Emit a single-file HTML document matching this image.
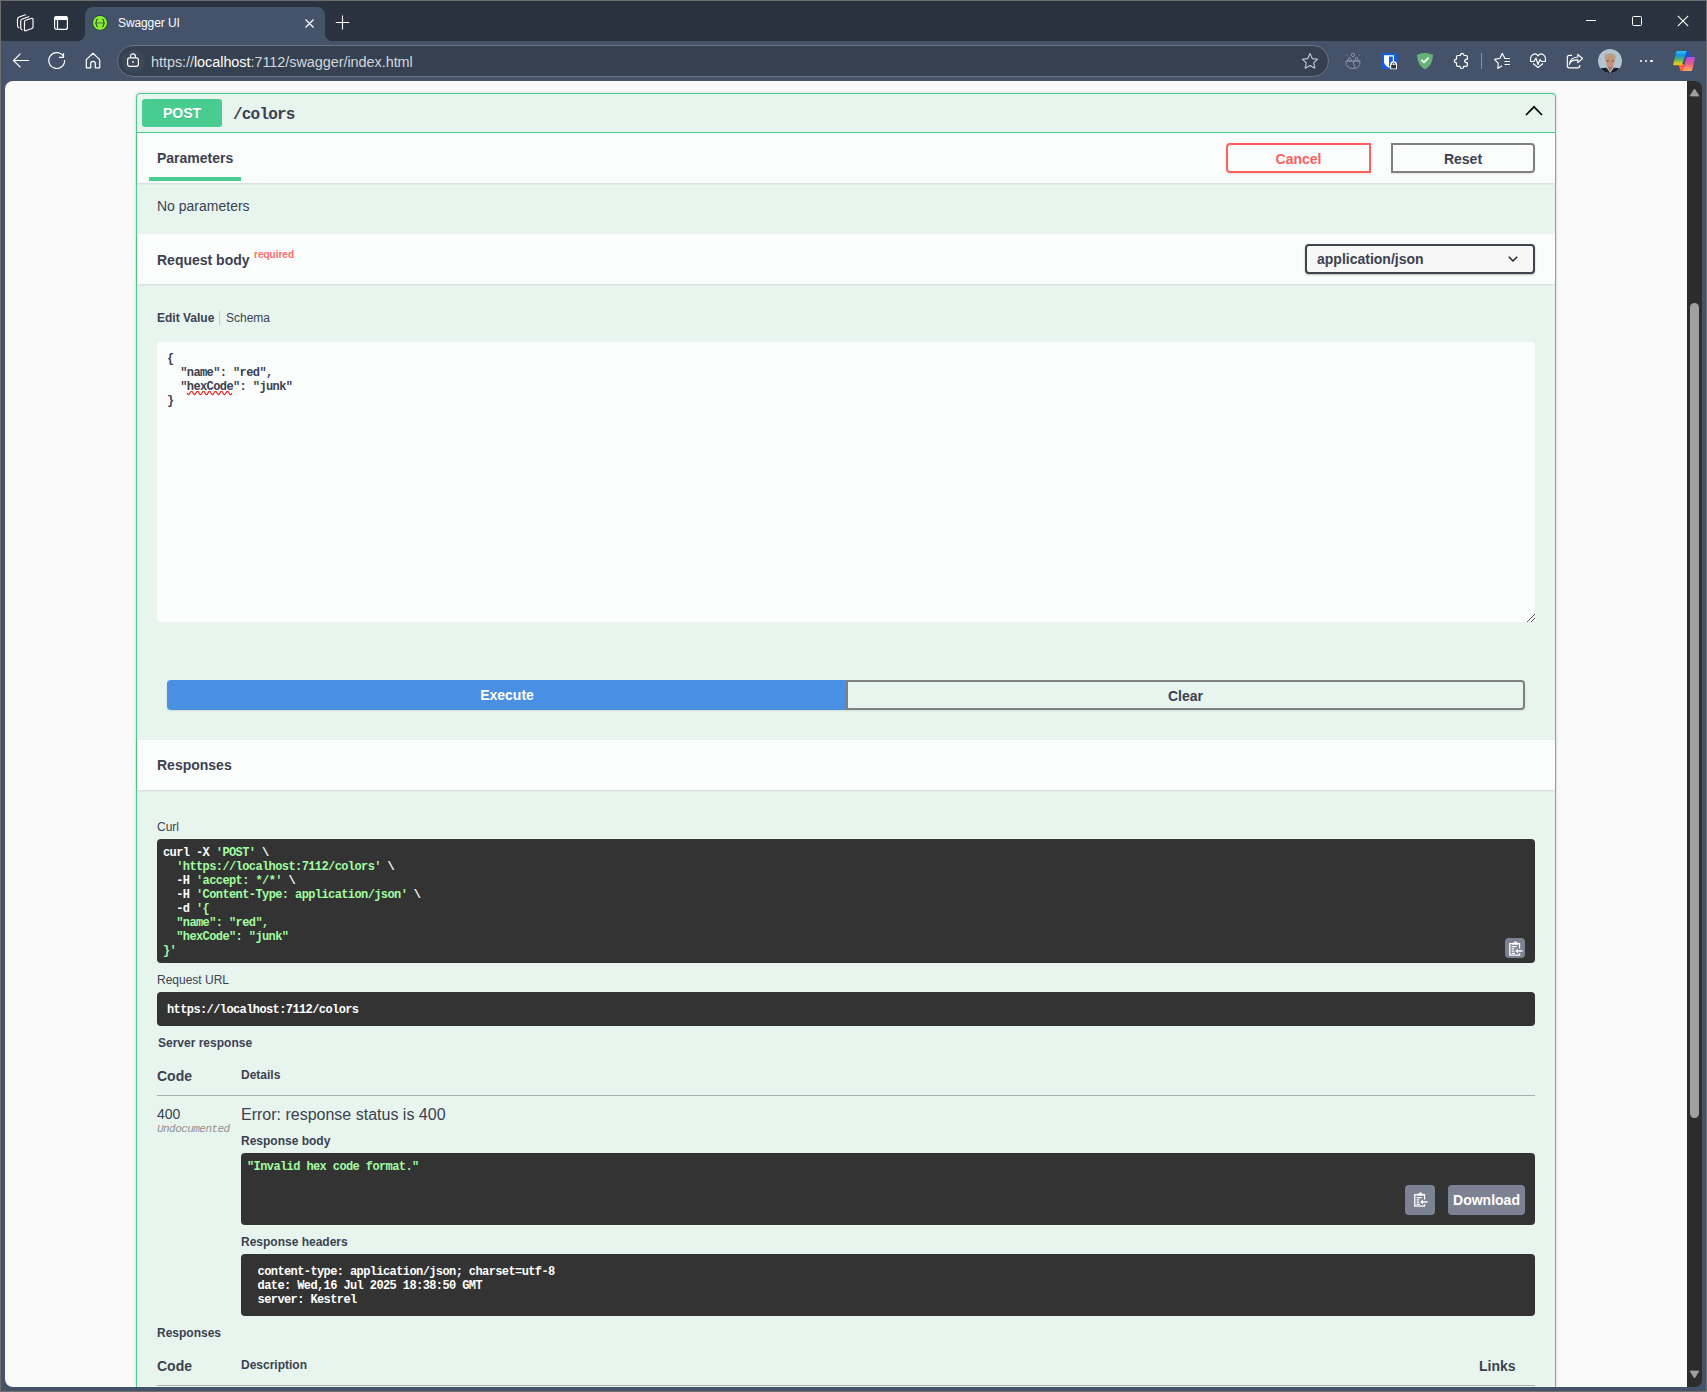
<!DOCTYPE html>
<html><head><meta charset="utf-8">
<style>
*{box-sizing:border-box;margin:0;padding:0}
html,body{width:1707px;height:1392px;overflow:hidden}
body{position:relative;background:#44536a;font-family:"Liberation Sans",sans-serif;color:#3b4151}
.a{position:absolute;white-space:pre}
.m{font-family:"Liberation Mono",monospace}
#outer{position:absolute;left:0;top:0;width:1707px;height:1392px;border:1px solid #6e6e6e;pointer-events:none;z-index:50}
#title{position:absolute;left:0;top:0;width:1707px;height:41px;background:#29323e}
#tab{position:absolute;left:85px;top:7px;width:240px;height:34px;background:#44536a;border-radius:8px 8px 0 0}
#toolbar{position:absolute;left:0;top:41px;width:1707px;height:40px;background:#44536a}
#addr{position:absolute;left:117px;top:45px;width:1212px;height:32px;border-radius:16px;background:#354050;border:1px solid #6a7482}
#content{position:absolute;left:5px;top:81px;width:1682px;height:1306px;background:#fafafa;border-radius:8px 0 0 8px;overflow:hidden}
#sb{position:absolute;left:1687px;top:81px;width:15px;height:1306px;background:#2c2c2c;border-radius:0 7px 7px 0}
/* page items use page coordinates: subtract content offset */
.p{position:absolute}
.ob{position:absolute;left:131px;top:12px;width:1420px;height:1400px;border:1px solid #49cc90;border-radius:4px;background:#e8f5ef;box-shadow:0 0 3px rgba(0,0,0,.19)}
.sh{position:absolute;left:0;width:1418px;height:50px;background:#fbfdfc;box-shadow:0 1px 2px rgba(0,0,0,.1)}
.b14{font-size:14px;font-weight:700;line-height:16px}
.r14{font-size:14px;line-height:16px}
.b12{font-size:12px;font-weight:700;line-height:14px}
.r12{font-size:12px;line-height:14px}
.code{font-family:"Liberation Mono",monospace;font-size:12px;font-weight:700;line-height:14px;letter-spacing:-0.6px}
.blk{position:absolute;background:#333;border-radius:4px}
.btn{position:absolute;border:2px solid #808080;box-shadow:0 1px 2px rgba(0,0,0,.1);font-size:14px;font-weight:700;text-align:center;line-height:28px}
.gr{color:#a2fca2}
.wh{color:#fff}
</style></head><body>
<div id="title"></div>
<div id="tab"></div>
<div class="p" style="left:77px;top:33px;width:8px;height:8px;background:radial-gradient(circle at 0 0, #29323e 8px, #44536a 8.5px)"></div>
<div class="p" style="left:325px;top:33px;width:8px;height:8px;background:radial-gradient(circle at 8px 0, #29323e 8px, #44536a 8.5px)"></div>
<div id="toolbar"></div>
<div id="addr"></div>
<!-- left title icons -->
<svg class="p" style="left:15px;top:13px" width="20" height="20" viewBox="0 0 20 20" fill="none" stroke="#fff" stroke-width="1.15" stroke-linejoin="round" stroke-linecap="round">
<path d="M10.5 1.8 L4.2 4 Q2.5 4.6 2.5 6.3 V12.8 Q2.5 14.2 3.8 14.8"/>
<path d="M13.8 3.8 L7.4 6 Q5.7 6.6 5.7 8.3 V14.8 Q5.7 16.2 7 16.8"/>
<path d="M9.5 8.8 Q9.5 7.6 10.6 7.3 L16.8 5.3 Q18 5 18 6.2 V14 Q18 15.1 16.9 15.5 L10.6 17.8 Q9.5 18.2 9.5 17 Z"/>
</svg>
<svg class="p" style="left:53px;top:15px" width="16" height="16" viewBox="0 0 16 16" fill="none" stroke="#fff" stroke-width="1.2">
<rect x="1.6" y="1.6" width="12.8" height="12.8" rx="2"/>
<path d="M1.6 4.5 H14.4 V3.5 Q14.4 1.6 12.4 1.6 H3.6 Q1.6 1.6 1.6 3.5 Z" fill="#fff"/>
<path d="M4.5 4.5 V14.4"/>
</svg>
<svg class="p" style="left:91px;top:14px" width="18" height="18" viewBox="0 0 18 18">
<circle cx="9" cy="8.9" r="7.5" fill="#88ee2c" stroke="#1d3550" stroke-width="0.9"/>
<path d="M4.6 8.9 H13.4" stroke="#5d9e3c" stroke-width="1.5"/>
<path d="M6.9 5.3 Q5.3 5.3 5.3 6.8 V7.9 Q5.3 8.9 4.3 8.9 Q5.3 8.9 5.3 9.9 V11 Q5.3 12.6 6.9 12.6 M11.1 5.3 Q12.7 5.3 12.7 6.8 V7.9 Q12.7 8.9 13.7 8.9 Q12.7 8.9 12.7 9.9 V11 Q12.7 12.6 11.1 12.6" fill="none" stroke="#24503a" stroke-width="1.05"/>
</svg>
<div class="a" style="left:118px;top:16px;font-size:12px;line-height:14px;color:#fff;letter-spacing:-0.1px">Swagger UI</div>
<svg class="p" style="left:303px;top:17px" width="13" height="13" viewBox="0 0 13 13"><path d="M2.5 2.5 L10.5 10.5 M10.5 2.5 L2.5 10.5" stroke="#fff" stroke-width="1.2"/></svg>
<svg class="p" style="left:334px;top:15px" width="16" height="16" viewBox="0 0 16 16"><path d="M8.5 0.6 V14.4 M1.8 7.5 H15.2" stroke="#fff" stroke-width="1.1"/></svg>
<!-- window controls -->
<div class="p" style="left:1586px;top:20px;width:10px;height:1px;background:#fff"></div>
<div class="p" style="left:1632px;top:16px;width:10px;height:10px;border:1px solid #fff;border-radius:1.5px"></div>
<svg class="p" style="left:1676px;top:14px" width="14" height="14" viewBox="0 0 14 14"><path d="M1.8 1.8 L12.2 12.2 M12.2 1.8 L1.8 12.2" stroke="#fff" stroke-width="1.1"/></svg>
<!-- nav icons -->
<svg class="p" style="left:11px;top:52px" width="20" height="18" viewBox="0 0 20 18" fill="none" stroke="#fff" stroke-width="1.2"><path d="M18 8.5 H2.8 M9.5 1.6 L2.5 8.5 L9.5 15.4"/></svg>
<svg class="p" style="left:47px;top:51px" width="20" height="20" viewBox="0 0 20 20" fill="none" stroke="#fff" stroke-width="1.2"><path d="M17.6 9 A7.9 7.9 0 1 1 16.3 5.2"/><path d="M12 6.3 H16.5 V2.1"/></svg>
<svg class="p" style="left:84px;top:51px" width="18" height="19" viewBox="0 0 18 19" fill="none" stroke="#fff" stroke-width="1.2" stroke-linejoin="round"><path d="M9 2.3 L2.3 8.6 V16.8 H6.7 V12.5 Q6.7 10.3 9 10.3 Q11.3 10.3 11.3 12.5 V16.8 H15.7 V8.6 Z"/></svg>
<div class="p" style="left:121.5px;top:49.5px;width:23px;height:23px;border-radius:12px;background:#3c4859"></div>
<svg class="p" style="left:124px;top:52px" width="18" height="18" viewBox="0 0 18 18" fill="none" stroke="#fff" stroke-width="1.2"><path d="M6.6 5.9 V4.2 Q6.6 1.8 9 1.8 Q11.4 1.8 11.4 4.2 V5.9"/><rect x="3.6" y="5.9" width="10.8" height="8.4" rx="2"/><rect x="8.2" y="9.2" width="1.6" height="1.6" fill="#fff" stroke="none"/></svg>
<div class="a" style="left:151px;top:54px;font-size:14.45px;line-height:16px;color:#d3d7dd;letter-spacing:-0.05px">https://<span style="color:#fff">localhost</span>:7112/swagger/index.html</div>
<!-- right icons -->
<svg class="p" style="left:1300px;top:52px" width="20" height="18" viewBox="0 0 20 18" fill="none" stroke="#c6cbd3" stroke-width="1.1" stroke-linejoin="round"><path d="M10 1.6 L12.3 6.6 L17.7 7.2 L13.7 10.8 L14.8 16.2 L10 13.5 L5.2 16.2 L6.3 10.8 L2.3 7.2 L7.7 6.6 Z"/></svg>
<svg class="p" style="left:1344px;top:52px" width="18" height="18" viewBox="0 0 18 18" fill="none" stroke="#8a94a3" stroke-width="1"><circle cx="9" cy="3" r="1.6"/><path d="M2 9 Q1.5 16.5 9 16.5 Q16.5 16.5 16 9 Z M5.5 5 L3.2 9 H7.8 Z M12.5 5 L10.2 9 H14.8 Z M9 9 L11 16.3"/><path d="M2.5 3 H3.5 M14.5 3 H15.5"/></svg>
<svg class="p" style="left:1381px;top:53px" width="17" height="17" viewBox="0 0 17 17"><rect x="0" y="0" width="16" height="16" rx="1.2" fill="#175ddc"/><path d="M3 2.2 H13 V8.8 Q13 12.5 8 14.8 Q3 12.5 3 8.8 Z" fill="#fff"/><path d="M8 3.4 H11.8 V8.8 Q11.8 11.6 8 13.4 Z" fill="#175ddc"/><path d="M9.2 16.3 V11.6 Q9.2 8.2 12.6 8.2 Q16 8.2 16 11.6 V16.3 Z" fill="#fff"/><path d="M10.2 15.5 V12 H15 V15.5 Z" fill="#333"/><path d="M11.3 12 V11.4 Q11.3 9.8 12.6 9.8 Q13.9 9.8 13.9 11.4 V12" fill="none" stroke="#333" stroke-width="0.9"/></svg>
<svg class="p" style="left:1416px;top:52px" width="18" height="18" viewBox="0 0 18 18"><path d="M9 1 Q13 1.2 17 2.8 Q17 13 9 17.5 Q1 13 1 2.8 Q5 1.2 9 1 Z" fill="#67b279"/><path d="M5.3 7.9 L8 10.4 L12.6 5.6" fill="none" stroke="#fff" stroke-width="1.6"/></svg>
<svg class="p" style="left:1450px;top:49px" width="24" height="24" viewBox="0 0 24 24" fill="none" stroke="#fff" stroke-width="1.2" stroke-linejoin="round"><path d="M6.5 7.8 Q6.5 6.5 7.8 6.5 H10.3 Q10.5 4.3 12.2 4.3 Q13.9 4.3 14.1 6.5 H16.1 Q17.4 6.5 17.4 7.8 V10.2 Q14.7 10.4 14.7 12 Q14.7 13.6 17.4 13.8 V16.1 Q17.4 17.4 16.1 17.4 H13.8 Q13.6 19.5 11.9 19.5 Q10.2 19.5 10 17.4 H7.8 Q6.5 17.4 6.5 16.1 V13.8 Q4.3 13.6 4.3 12 Q4.3 10.4 6.5 10.2 Z"/></svg>
<div class="p" style="left:1481px;top:53px;width:1px;height:16px;background:#8893a3"></div>
<svg class="p" style="left:1493px;top:52px" width="19" height="18" viewBox="0 0 19 18" fill="none" stroke="#fff" stroke-width="1.15" stroke-linejoin="round"><path d="M12 6.5 L9.2 1.4 L7 6.3 L1.5 7.4 L5.3 11.3 L4.8 16.4 L9 13.8"/><path d="M11.5 6.5 H17 M11.5 9.5 H17 M11.5 12.5 H17"/></svg>
<svg class="p" style="left:1529px;top:52px" width="19" height="18" viewBox="0 0 19 18" fill="none" stroke="#fff" stroke-width="1.15" stroke-linejoin="round"><path d="M1.8 9 Q0.6 4.2 4 2.4 Q7 1 9 3.8 Q11 1 14 2.4 Q17.4 4.2 16.2 9"/><path d="M1 9.5 H5 L7 6 L9 12.5 L11 7.5 L12.5 9.5 H17"/><path d="M4 11.5 L9 15.5 L14 11.5"/></svg>
<svg class="p" style="left:1565px;top:52px" width="19" height="18" viewBox="0 0 19 18" fill="none" stroke="#fff" stroke-width="1.15" stroke-linejoin="round"><path d="M7 3.3 H4.3 Q2.3 3.3 2.3 5.3 V13.8 Q2.3 15.8 4.3 15.8 H12.8 Q14.8 15.8 14.8 13.8 V13"/><path d="M4.3 12.5 Q5.2 7.8 12.8 7.8 V10.6 L17.6 6.5 L12.8 2.4 V5 Q5 5.5 4.3 12.5 Z"/></svg>
<svg class="p" style="left:1598px;top:49px" width="24" height="24" viewBox="0 0 24 24"><defs><clipPath id="avc"><circle cx="12" cy="12" r="12"/></clipPath></defs><g clip-path="url(#avc)"><rect width="24" height="24" fill="#b4c3d0"/><ellipse cx="12.2" cy="8.6" rx="5.6" ry="4.6" fill="#b2a58e"/><path d="M9 16.5 L12.2 23 L15.4 16.5 Z" fill="#a97a5a"/><ellipse cx="12.2" cy="12" rx="4.3" ry="6.2" fill="#c49579"/><path d="M8.2 12 H11 M13.4 12 H16.2" stroke="#6e5242" stroke-width="1"/><path d="M0 24 V21 Q3 18.5 8.5 18.8 L12.2 24 L15.9 18.8 Q21 18.5 24 21 V24 Z" fill="#1a1f2c"/></g></svg>
<div class="p" style="left:1639.6px;top:59.9px;width:2.5px;height:2.5px;border-radius:1px;background:#fff"></div>
<div class="p" style="left:1644.9px;top:59.9px;width:2.5px;height:2.5px;border-radius:1px;background:#fff"></div>
<div class="p" style="left:1650.1px;top:59.9px;width:2.5px;height:2.5px;border-radius:1px;background:#fff"></div>
<svg class="p" style="left:1668px;top:47px" width="32" height="28" viewBox="0 0 32 28"><defs><linearGradient id="cg1" x1="0" y1="0" x2="0" y2="1"><stop offset="0" stop-color="#2cc4ff"/><stop offset=".3" stop-color="#1592dc"/><stop offset=".6" stop-color="#52b46e"/><stop offset=".85" stop-color="#d8c624"/><stop offset="1" stop-color="#f5c400"/></linearGradient><linearGradient id="cg2" x1="0" y1="0" x2="0" y2="1"><stop offset="0" stop-color="#b34ff0"/><stop offset=".45" stop-color="#e8588c"/><stop offset="1" stop-color="#ffaa55"/></linearGradient></defs>
<path d="M16.5 4 H19.5 Q20.5 4 21 5 L23 10.5 H16 Z" fill="#1e4fd6"/>
<path d="M10.5 17 H16 V24 H14 Q12.5 24 12 22.5 Z" fill="#ff6536"/>
<path d="M9.5 4 H17.8 Q18.6 4 18.4 4.8 L14 17.4 Q13.6 18.3 12.6 18.3 H6 Q5 18.3 5.2 17.3 L8.3 5 Q8.6 4 9.5 4 Z" fill="url(#cg1)"/>
<path d="M19.8 10 H26 Q27 10 26.9 11 L24.3 22.8 Q24 24 22.8 24 H15.8 Q14.9 24 15.1 23.1 L18.5 11 Q18.8 10 19.8 10 Z" fill="url(#cg2)"/></svg>
<div id="content">
<div id="pg" style="position:absolute;left:-5px;top:-81px;width:1707px;height:1392px">
<!-- opblock -->
<div class="p" style="left:136px;top:93px;width:1420px;height:1400px;border:1px solid #49cc90;border-radius:4px;background:#e8f5ef;box-shadow:0 0 3px rgba(0,0,0,.19)"></div>
<div class="p" style="left:137px;top:132px;width:1418px;height:1px;background:#49cc90"></div>
<div class="p b14" style="left:142px;top:99px;width:80px;height:28px;line-height:28px;background:#49cc90;border-radius:3px;color:#fff;text-align:center;text-shadow:0 1px 0 rgba(0,0,0,.1)">POST</div>
<div class="a m" style="left:233px;top:106px;font-size:16px;line-height:18px;font-weight:700;letter-spacing:-0.8px;color:#3b4151">/colors</div>
<svg class="p" style="left:1524px;top:103px" width="20" height="14" viewBox="0 0 20 14"><path d="M2 12 L10 3.8 L18 12" fill="none" stroke="#000" stroke-width="1.7"/></svg>
<!-- parameters header -->
<div class="p" style="left:137px;top:133px;width:1418px;height:50px;background:#fbfdfc;box-shadow:0 1px 2px rgba(0,0,0,.1)"></div>
<div class="a b14" style="left:157px;top:150px">Parameters</div>
<div class="p" style="left:149px;top:177px;width:92px;height:4px;background:#49cc90"></div>
<div class="btn" style="left:1226px;top:143px;width:145px;height:30px;border-color:#ff6060;color:#ff6060;border-radius:4px 0 0 4px">Cancel</div>
<div class="btn" style="left:1391px;top:143px;width:144px;height:30px;border-color:#808080;color:#3b4151;border-radius:0 4px 4px 0">Reset</div>
<div class="a r14" style="left:157px;top:198px">No parameters</div>
<!-- request body header -->
<div class="p" style="left:137px;top:234px;width:1418px;height:50px;background:#fbfdfc;box-shadow:0 1px 2px rgba(0,0,0,.1)"></div>
<div class="a b14" style="left:157px;top:252px">Request body</div>
<div class="a" style="left:254px;top:249px;font-size:10px;line-height:12px;font-weight:700;color:#ff6a6a">required</div>
<div class="p" style="left:1305px;top:244px;width:230px;height:30px;border:2px solid #41444e;border-radius:4px;background:#f7f7f7;box-shadow:0 1px 2px rgba(0,0,0,.25)"></div>
<div class="a b14" style="left:1317px;top:251px">application/json</div>
<svg class="p" style="left:1507px;top:254px" width="12" height="10" viewBox="0 0 12 10"><path d="M1.8 2.8 L6 7 L10.2 2.8" fill="none" stroke="#222" stroke-width="1.5"/></svg>
<!-- edit value -->
<div class="a b12" style="left:157px;top:311px">Edit Value</div>
<div class="p" style="left:219px;top:311px;width:1px;height:14px;background:#c8cdd0"></div>
<div class="a r12" style="left:226px;top:311px">Schema</div>
<div class="p" style="left:157px;top:342px;width:1378px;height:280px;background:#fbfdfc;border-radius:4px"></div>
<div class="a code" style="left:167px;top:352px;color:#3b4151">{
  "name": "red",
  "hexCode": "junk"
}</div>
<svg class="p" style="left:186px;top:391px" width="48" height="7" viewBox="0 0 48 7"><path d="M1 2 Q2.5 5.5 4 2 T7 2 T10 2 T13 2 T16 2 T19 2 T22 2 T25 2 T28 2 T31 2 T34 2 T37 2 T40 2 T43 2 T46 2" fill="none" stroke="#f01010" stroke-width="1.1"/></svg>
<svg class="p" style="left:1525px;top:612px" width="11" height="11" viewBox="0 0 11 11"><path d="M2 10 L10 2 M6 10 L10 6" stroke="#555" stroke-width="1"/></svg>
<!-- execute/clear -->
<div class="p b14" style="left:167px;top:680px;width:680px;height:30px;line-height:30px;background:#4990e2;color:#fff;text-align:center;border-radius:4px 0 0 4px;box-shadow:0 1px 2px rgba(0,0,0,.1)">Execute</div>
<div class="btn" style="left:846px;top:680px;width:679px;height:30px;border-radius:0 4px 4px 0;color:#3b4151">Clear</div>
<!-- responses header -->
<div class="p" style="left:137px;top:740px;width:1418px;height:50px;background:#fbfdfc;box-shadow:0 1px 2px rgba(0,0,0,.1)"></div>
<div class="a b14" style="left:157px;top:757px">Responses</div>
<div class="a r12" style="left:157px;top:820px">Curl</div>
<div class="blk" style="left:157px;top:839px;width:1378px;height:124px"></div>
<div class="a code wh" style="left:163px;top:846px">curl -X <span class="gr">'POST'</span> \
  <span class="gr">'https://localhost:7112/colors'</span> \
  -H <span class="gr">'accept: */*'</span> \
  -H <span class="gr">'Content-Type: application/json'</span> \
  -d <span class="gr">'{
  "name": "red",
  "hexCode": "junk"
}'</span></div>
<div class="p" style="left:1505px;top:938px;width:20px;height:20px;background:#7d8293;border-radius:4px"></div>
<svg class="p" style="left:1508px;top:941px" width="15" height="15" viewBox="0 0 16 16" fill="none" stroke="#fff" stroke-width="1.4"><path d="M4.5 2.8 H1.9 V15 H12.3 V13 M12.3 8 V2.8 H9.5"/><path d="M4.3 1.8 H6.6 Q7.1 0.3 8 0.3 Q8.9 0.3 9.4 1.8 H10.7 V4 H4.3 Z" fill="#fff" stroke="none"/><path d="M3.8 6 H9.2 M3.8 8.4 H6.8 M3.8 10.8 H6.8 M3.8 13.2 H7.4" stroke-width="1.3"/><path d="M9 10.6 H15.6" stroke-width="1.6"/><path d="M7.6 10.6 L10.6 7.9 V13.3 Z" fill="#fff" stroke="none"/></svg>
<div class="a r12" style="left:157px;top:973px">Request URL</div>
<div class="blk" style="left:157px;top:992px;width:1378px;height:34px"></div>
<div class="a code wh" style="left:167px;top:1003px">https://localhost:7112/colors</div>
<div class="a b12" style="left:158px;top:1036px">Server response</div>
<div class="a b14" style="left:157px;top:1068px">Code</div>
<div class="a b12" style="left:241px;top:1068px">Details</div>
<div class="p" style="left:157px;top:1095px;width:1378px;height:1px;background:#a9b3b5"></div>
<div class="a r14" style="left:157px;top:1106px">400</div>
<div class="a m" style="left:157px;top:1122px;font-size:11px;line-height:12px;font-style:italic;font-weight:400;color:#909090;letter-spacing:-0.55px;top:1123px">Undocumented</div>
<div class="a" style="left:241px;top:1106px;font-size:16px;line-height:18px">Error: response status is 400</div>
<div class="a b12" style="left:241px;top:1134px">Response body</div>
<div class="blk" style="left:241px;top:1153px;width:1294px;height:72px"></div>
<div class="a code gr" style="left:247px;top:1160px">"Invalid hex code format."</div>
<div class="p" style="left:1405px;top:1185px;width:30px;height:30px;background:#7d8293;border-radius:4px"></div>
<svg class="p" style="left:1413px;top:1192px" width="15" height="15" viewBox="0 0 16 16" fill="none" stroke="#fff" stroke-width="1.4"><path d="M4.5 2.8 H1.9 V15 H12.3 V13 M12.3 8 V2.8 H9.5"/><path d="M4.3 1.8 H6.6 Q7.1 0.3 8 0.3 Q8.9 0.3 9.4 1.8 H10.7 V4 H4.3 Z" fill="#fff" stroke="none"/><path d="M3.8 6 H9.2 M3.8 8.4 H6.8 M3.8 10.8 H6.8 M3.8 13.2 H7.4" stroke-width="1.3"/><path d="M9 10.6 H15.6" stroke-width="1.6"/><path d="M7.6 10.6 L10.6 7.9 V13.3 Z" fill="#fff" stroke="none"/></svg>
<div class="p b14" style="left:1448px;top:1185px;width:77px;height:30px;line-height:30px;background:#7d8293;border-radius:4px;color:#fff;text-align:center">Download</div>
<div class="a b12" style="left:241px;top:1235px">Response headers</div>
<div class="blk" style="left:241px;top:1254px;width:1294px;height:62px"></div>
<div class="a code wh" style="left:251px;top:1265px"> content-type: application/json; charset=utf-8
 date: Wed,16 Jul 2025 18:38:50 GMT
 server: Kestrel</div>
<div class="a b12" style="left:157px;top:1326px">Responses</div>
<div class="a b14" style="left:157px;top:1358px">Code</div>
<div class="a b12" style="left:241px;top:1358px">Description</div>
<div class="a b14" style="left:1479px;top:1358px">Links</div>
<div class="p" style="left:157px;top:1385px;width:1378px;height:1px;background:#a9b3b5"></div>
</div>
</div>
<div id="sb"></div>
<svg class="p" style="left:1689px;top:88px" width="11" height="9" viewBox="0 0 11 9"><path d="M5.5 1 L10 8 H1 Z" fill="#a0a0a0" stroke="#a0a0a0" stroke-width="0.8" stroke-linejoin="round"/></svg>
<svg class="p" style="left:1689px;top:1370px" width="11" height="9" viewBox="0 0 11 9"><path d="M5.5 8 L10 1 H1 Z" fill="#a0a0a0" stroke="#a0a0a0" stroke-width="0.8" stroke-linejoin="round"/></svg>
<div class="p" style="left:1690px;top:303px;width:9px;height:815px;border-radius:5px;background:#9f9f9f"></div>
<div id="outer"></div>
</body></html>
